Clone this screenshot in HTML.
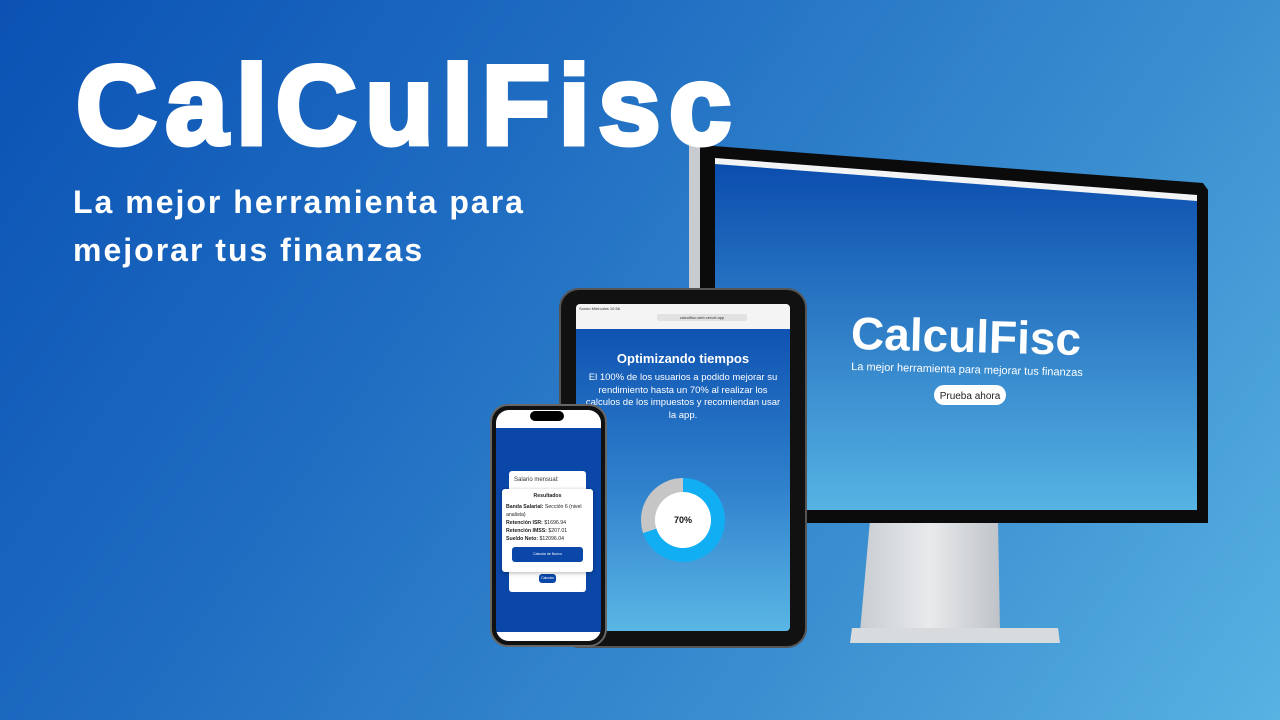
<!DOCTYPE html>
<html><head><meta charset="utf-8"><style>
*{margin:0;padding:0;box-sizing:border-box}
body{width:1280px;height:720px;overflow:hidden;position:relative;font-family:"Liberation Sans",sans-serif;background:linear-gradient(125deg,#0b52b4 0%,#1f6dc2 35%,#3b8fd0 70%,#58b2e2 100%)}
.abs{position:absolute}
h1{position:absolute;left:76px;top:50px;font-size:112px;line-height:112px;font-weight:900;color:#fff;letter-spacing:8.5px;-webkit-text-stroke:5px #fff;z-index:5}
.sub{position:absolute;left:73px;top:178px;font-size:32px;line-height:48px;font-weight:bold;color:#fff;z-index:5;letter-spacing:2px}
</style></head><body>
<svg class="abs" style="left:0;top:0" width="1280" height="720">
<defs>
<linearGradient id="scr" x1="0" y1="0" x2="0" y2="1"><stop offset="0" stop-color="#0a4cad"/><stop offset="1" stop-color="#56b3e3"/></linearGradient>
<linearGradient id="st" x1="0" y1="0" x2="1" y2="0"><stop offset="0" stop-color="#c9cdd2"/><stop offset=".5" stop-color="#e8eaec"/><stop offset="1" stop-color="#bfc3c8"/></linearGradient>
</defs>
<rect x="689" y="140" width="14" height="160" fill="#c8ccd0"/>
<polygon points="870,520 998,520 1000,632 860,632" fill="url(#st)"/>
<polygon points="852,628 1058,628 1060,643 850,643" fill="#d8dbde"/>
<polygon points="700,145 1203,183 1208,190 1208,523 700,523" fill="#0b0b0c"/>
<polygon points="715,160 1197,197 1197,510 715,510" fill="url(#scr)"/>
<polygon points="715,158 1197,195 1197,201 715,164" fill="#f2f4f6"/>
<text x="966" y="352" text-anchor="middle" font-family="Liberation Sans,sans-serif" font-weight="bold" font-size="46" fill="#fff" transform="rotate(1.5 966 340)">CalculFisc</text>
<text x="967" y="373" text-anchor="middle" font-family="Liberation Sans,sans-serif" font-size="11" fill="#fff" transform="rotate(1.5 967 370)">La mejor herramienta para mejorar tus finanzas</text>
<rect x="934" y="385" width="72" height="20" rx="10" fill="#fff"/>
<text x="970" y="399" text-anchor="middle" font-family="Liberation Sans,sans-serif" font-size="10" fill="#222">Prueba ahora</text>
</svg>
<h1>CalCulFisc</h1>
<div class="sub">La mejor herramienta para<br>mejorar tus finanzas</div>

<!-- tablet -->
<div class="abs" style="left:559px;top:288px;width:248px;height:360px;background:#111;border:2px solid #555;border-radius:20px"></div>
<div class="abs" style="left:576px;top:304px;width:214px;height:327px;border-radius:4px;overflow:hidden;background:linear-gradient(#0a4cad,#2f80cc 55%,#5ab6e4)">
 <div style="background:#f4f4f4;height:25px;font-size:4px;color:#333;padding:2px 3px">Sondo Miércoles 10:56
  <div style="margin:3px 0 0 78px;width:90px;height:7px;background:#e2e2e2;border-radius:2px;font-size:4px;text-align:center;line-height:7px">calculfisc-web.vercel.app</div></div>
 <div style="color:#fff;text-align:center;font-weight:bold;font-size:13px;margin-top:22px">Optimizando tiempos</div>
 <div style="color:#fff;text-align:center;font-size:9.5px;line-height:12.5px;margin:6px 8px 0">El 100% de los usuarios a podido mejorar su rendimiento hasta un 70% al realizar los calculos de los impuestos y recomiendan usar la app.</div>
</div>
<div class="abs" style="left:641px;top:478px;width:84px;height:84px;border-radius:50%;background:conic-gradient(#12aef4 0 70%,#c6c6c6 70% 100%)"></div>
<div class="abs" style="left:655px;top:492px;width:56px;height:56px;border-radius:50%;background:#fff;font-size:9px;font-weight:bold;text-align:center;line-height:56px;color:#111">70%</div>

<!-- phone -->
<div class="abs" style="left:490px;top:404px;width:117px;height:243px;background:#111;border:2px solid #666;border-radius:18px"></div>
<div class="abs" style="left:496px;top:410px;width:105px;height:231px;border-radius:13px;overflow:hidden;background:#0a47a8">
 <div style="background:#fff;height:18px"></div>
 <div style="position:absolute;bottom:0;left:0;right:0;height:9px;background:#fff"></div>
</div>
<div class="abs" style="left:530px;top:411px;width:34px;height:10px;background:#000;border-radius:6px"></div>
<div class="abs" style="left:509px;top:471px;width:77px;height:121px;background:#fff;border-radius:3px;font-size:6px;padding:6px 5px;color:#333">Salario mensual:
 <div style="position:absolute;left:30px;top:103px;width:17px;height:9px;background:#0a47a8;border-radius:3px;color:#fff;font-size:3.5px;text-align:center;line-height:9px">Calcular</div></div>
<div class="abs" style="left:502px;top:489px;width:91px;height:83px;background:#fff;border-radius:3px;font-size:5.2px;line-height:8px;padding:3px 4px;color:#222;box-shadow:0 1px 4px rgba(0,0,0,.3)">
 <div style="text-align:center;font-weight:bold;margin-bottom:3px">Resultados</div>
 <b>Banda Salarial:</b> Sección 6 (nivel analista)<br><b>Retención ISR:</b> $1696.94<br><b>Retención IMSS:</b> $207.01<br><b>Sueldo Neto:</b> $12096.04
 <div style="margin-top:4px;margin-left:6px;width:71px;height:15px;background:#0a47a8;border-radius:3px;color:#fff;font-size:3.5px;text-align:center;line-height:15px">Calcular de Nuevo</div>
</div>
</body></html>
